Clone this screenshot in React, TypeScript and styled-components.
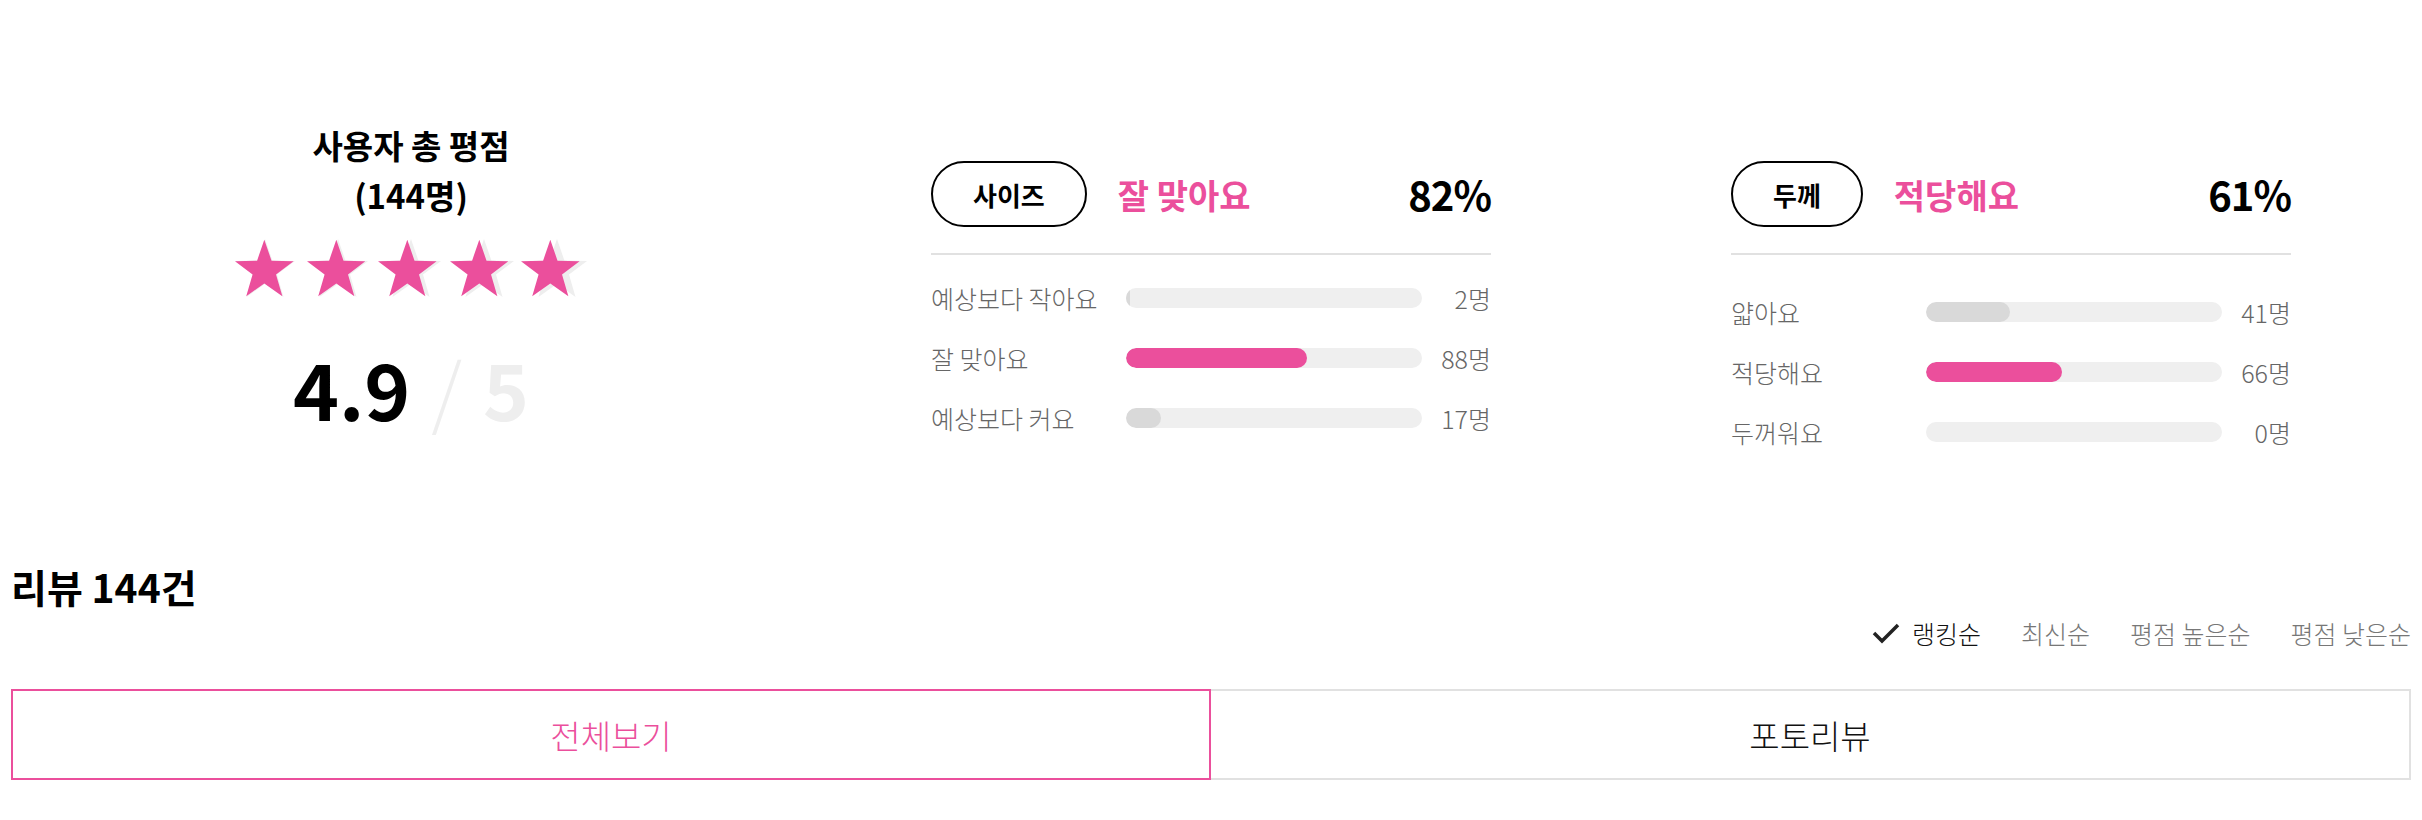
import React from 'react';
import styled, { createGlobalStyle } from 'styled-components';

const PINK = '#eb4f9c';
const FONT = "'Noto Sans CJK KR', 'Noto Sans', sans-serif";

const GlobalStyle = createGlobalStyle`
  body {
    margin: 0;
    background: #fff;
    font-family: ${FONT};
    color: #000;
  }
`;

type Option = { label: string; count: number };
type Fit = {
  name: string;
  answer: string;
  percent: number;
  offset: number;
  options: Option[];
};

const TOTAL = 144;

const fits: Fit[] = [
  {
    name: '사이즈',
    answer: '잘 맞아요',
    percent: 82,
    offset: 13,
    options: [
      { label: '예상보다 작아요', count: 2 },
      { label: '잘 맞아요', count: 88 },
      { label: '예상보다 커요', count: 17 },
    ],
  },
  {
    name: '두께',
    answer: '적당해요',
    percent: 61,
    offset: 27,
    options: [
      { label: '얇아요', count: 41 },
      { label: '적당해요', count: 66 },
      { label: '두꺼워요', count: 0 },
    ],
  },
];

const sorts = ['랭킹순', '최신순', '평점 높은순', '평점 낮은순'];

const Page = styled.div`
  width: 2400px;
  margin: 0 auto;
  padding-top: 120px;
`;

const Summary = styled.section`
  display: grid;
  grid-template-columns: repeat(3, 1fr);
  height: 440px;
`;

const ScoreColumn = styled.div`
  display: flex;
  flex-direction: column;
  align-items: center;
`;

const ScoreTitle = styled.h3`
  margin: 0;
  font-size: 33px;
  font-weight: 700;
  line-height: 50px;
  text-align: center;
`;

const Stars = styled.div`
  position: relative;
  margin-top: 19px;
  height: 60px;
`;

const StarRow = styled.div<{ $fill?: boolean }>`
  display: flex;
  gap: 13px;
  color: ${({ $fill }) => ($fill ? PINK : '#eee')};
  ${({ $fill }) =>
    $fill &&
    `
    position: absolute;
    top: 0;
    left: 0;
    overflow: hidden;
  `}
`;

const Score = styled.div`
  margin-top: 48px;
  display: flex;
  align-items: baseline;
  gap: 21px;
  font-size: 78px;
  line-height: 80px;
  font-weight: 700;
`;

const ScoreMax = styled.span`
  color: #eee;
`;

const Slash = styled.span`
  color: #eee;
  font-weight: 300;
`;

const FitColumn = styled.div`
  width: 560px;
  margin: 0 auto;
  padding-top: 41px;
`;

const FitHeader = styled.div`
  display: flex;
  align-items: center;
  height: 66px;
  padding-bottom: 26px;
  border-bottom: 2px solid #e1e1e1;
`;

const Pill = styled.span`
  box-sizing: border-box;
  display: inline-flex;
  align-items: center;
  height: 66px;
  padding: 0 40px;
  border: 2px solid #000;
  border-radius: 33px;
  font-size: 26px;
  font-weight: 700;
`;

const Answer = styled.span`
  margin-left: 31px;
  color: ${PINK};
  font-size: 34px;
  font-weight: 700;
`;

const Percent = styled.span`
  margin-left: auto;
  font-size: 40px;
  font-weight: 700;
  letter-spacing: -1px;
`;

const OptionList = styled.ul<{ $offset: number }>`
  list-style: none;
  margin: 0;
  padding: ${({ $offset }) => $offset}px 0 0;
`;

const OptionRow = styled.li`
  display: grid;
  grid-template-columns: 195px 296px 1fr;
  align-items: center;
  height: 60px;
  font-size: 25px;
  font-weight: 300;
  color: #666;
`;

const Track = styled.div`
  height: 20px;
  border-radius: 10px;
  background: #efefef;
  overflow: hidden;
`;

const Bar = styled.div<{ $top: boolean }>`
  height: 100%;
  border-radius: 10px;
  background: ${({ $top }) => ($top ? PINK : '#d9d9d9')};
`;

const Count = styled.span`
  text-align: right;
`;

const ReviewHeader = styled.div`
  display: flex;
  flex-direction: column;
`;

const ReviewTitle = styled.h2`
  margin: 0;
  font-size: 39px;
  font-weight: 700;
  line-height: 52px;
`;

const SortBar = styled.div`
  display: flex;
  justify-content: flex-end;
  align-items: center;
  gap: 40px;
  margin-top: 4px;
`;

const SortItem = styled.button<{ $active?: boolean }>`
  display: flex;
  align-items: center;
  gap: 12px;
  padding: 0;
  border: 0;
  background: none;
  font-family: ${FONT};
  font-size: 25px;
  font-weight: 300;
  color: ${({ $active }) => ($active ? '#111' : '#777')};
  line-height: 34px;
`;

const Tabs = styled.div`
  display: grid;
  grid-template-columns: 1fr 1fr;
  margin-top: 39px;
`;

const Tab = styled.button<{ $active?: boolean }>`
  box-sizing: border-box;
  height: 91px;
  border: 2px solid ${({ $active }) => ($active ? PINK : '#e1e1e1')};
  ${({ $active }) => !$active && 'border-left: 0;'}
  background: #fff;
  font-family: ${FONT};
  font-size: 33px;
  font-weight: 300;
  color: ${({ $active }) => ($active ? PINK : '#111')};
`;

const Star = () => (
  <svg width="60" height="58" viewBox="0 0 60 58" fill="currentColor">
    <polygon points="30,0 37.4,21.5 60,22 42,35.6 48.5,58 30,44.8 11.5,58 18,35.6 0,22 22.6,21.5" />
  </svg>
);

const Check = () => (
  <svg width="28" height="22" viewBox="0 0 28 22" fill="none">
    <polyline points="2,11 10,19 26,3" stroke="#222" strokeWidth="3.5" />
  </svg>
);

const FitSummary = ({ fit }: { fit: Fit }) => {
  const max = Math.max(...fit.options.map((o) => o.count));
  return (
    <FitColumn>
      <FitHeader>
        <Pill>{fit.name}</Pill>
        <Answer>{fit.answer}</Answer>
        <Percent>{fit.percent}%</Percent>
      </FitHeader>
      <OptionList $offset={fit.offset}>
        {fit.options.map((o) => (
          <OptionRow key={o.label}>
            <span>{o.label}</span>
            <Track>
              <Bar $top={o.count === max} style={{ width: `${(o.count / TOTAL) * 100}%` }} />
            </Track>
            <Count>{o.count}명</Count>
          </OptionRow>
        ))}
      </OptionList>
    </FitColumn>
  );
};

const App = () => {
  const rating = 4.9;
  return (
    <>
      <GlobalStyle />
      <Page>
        <Summary>
          <ScoreColumn>
            <ScoreTitle>
              사용자 총 평점
              <br />
              (144명)
            </ScoreTitle>
            <Stars>
              <StarRow>
                {[0, 1, 2, 3, 4].map((i) => (
                  <Star key={i} />
                ))}
              </StarRow>
              <StarRow $fill style={{ width: `${(rating / 5) * 100}%` }}>
                {[0, 1, 2, 3, 4].map((i) => (
                  <Star key={i} />
                ))}
              </StarRow>
            </Stars>
            <Score>
              <span>{rating}</span>
              <Slash>/</Slash>
              <ScoreMax>5</ScoreMax>
            </Score>
          </ScoreColumn>
          {fits.map((f) => (
            <FitSummary key={f.name} fit={f} />
          ))}
        </Summary>
        <ReviewHeader>
          <ReviewTitle>리뷰 144건</ReviewTitle>
          <SortBar>
            {sorts.map((s, i) => (
              <SortItem key={s} $active={i === 0}>
                {i === 0 && <Check />}
                {s}
              </SortItem>
            ))}
          </SortBar>
        </ReviewHeader>
        <Tabs>
          <Tab $active>전체보기</Tab>
          <Tab>포토리뷰</Tab>
        </Tabs>
      </Page>
    </>
  );
};

export default App;
